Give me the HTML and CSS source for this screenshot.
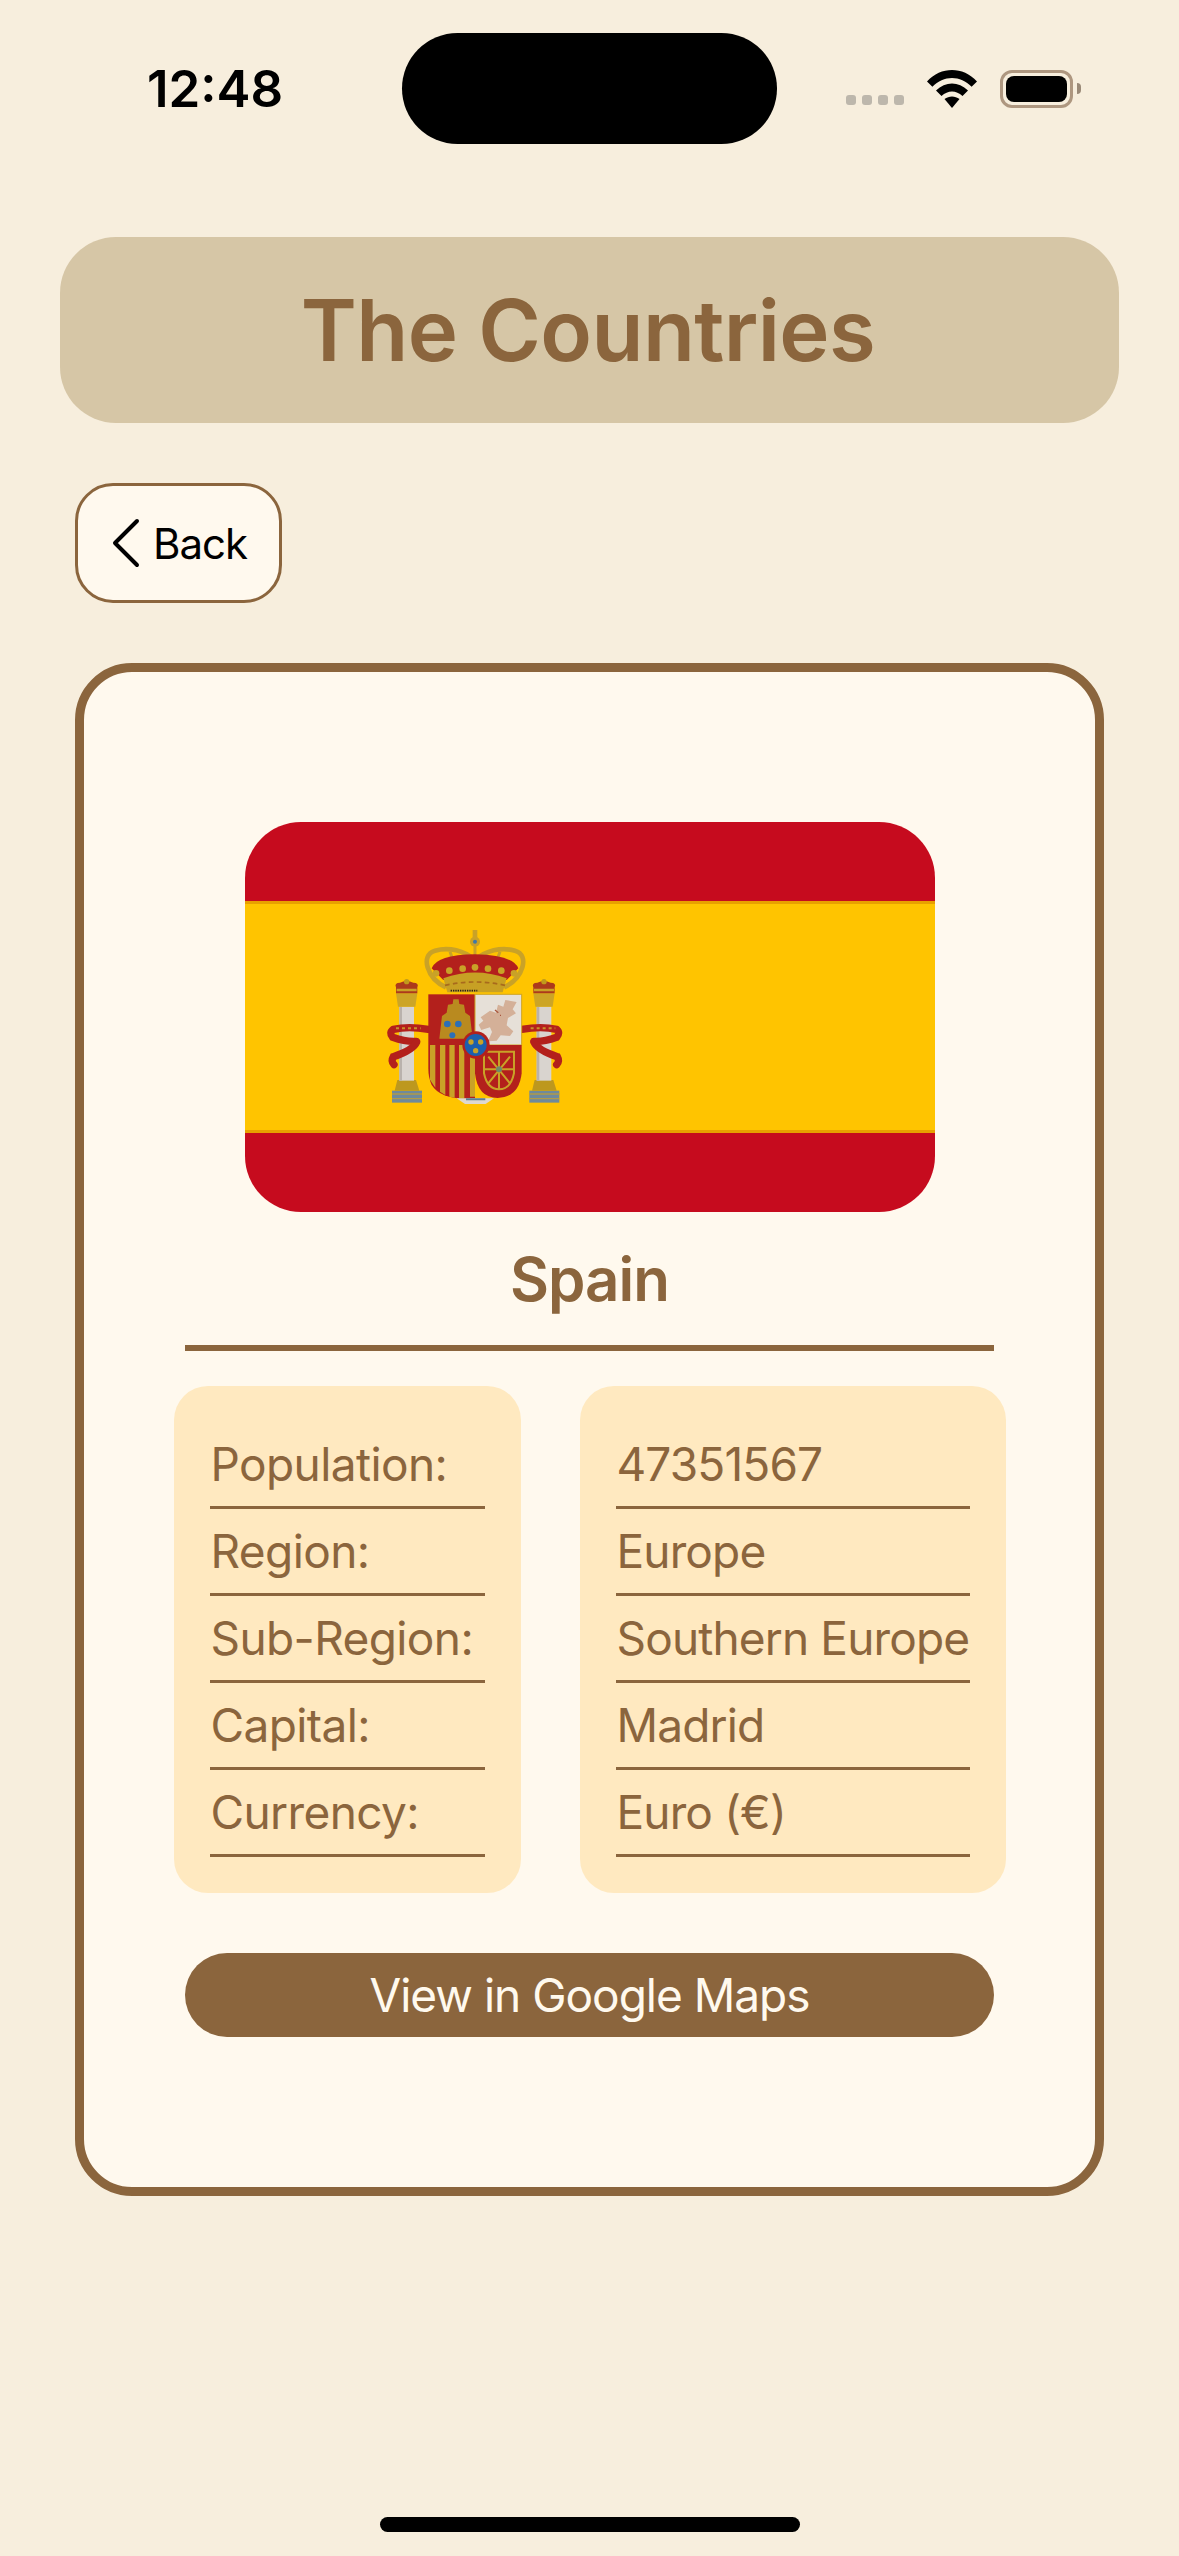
FILE: index.html
```html
<!DOCTYPE html>
<html lang="en">
  <head>
    <meta charset="UTF-8" />
    <meta name="viewport" content="width=device-width, initial-scale=1.0" />
    <title>The Countries</title>
    <link rel="stylesheet" href="styles.css">
  </head>
  <body>
    <div class="screen">
      <div class="status">
        <div class="status_time">12:48</div>
        <div class="island"></div>
        <div class="status_icons">
          <div class="signal"><span></span><span></span><span></span><span></span></div>
          <svg class="wifi" width="50" height="38" viewBox="0 0 50 38">
            <path d="M0 11.500C14-3.800 36-3.800 50 11.500L44.600 16.800C33.500 5 16.500 5 5.400 16.800Z" fill="#000" />
            <path d="M9 20.600C18.500 11 31.500 11 41 20.600L35.500 26C29 20 21 20 14.500 26Z" fill="#000" />
            <path d="M17.500 29C22 25.500 28 25.500 32.500 29L25 38Z" fill="#000" />
          </svg>
          <div class="battery"><div class="battery_level"></div></div>
          <div class="battery_cap"></div>
        </div>
      </div>

      <h1 class="app_title">The Countries</h1>

      <button class="back_btn">
        <svg width="28" height="50" viewBox="0 0 28 50">
          <path d="M25 3 3 25l22 22" fill="none" stroke="#000" stroke-width="4" stroke-linecap="round" stroke-linejoin="round" />
        </svg>
        <span>Back</span>
      </button>

      <div class="card">
        <svg class="flag" width="690" height="390" viewBox="0 0 690 390">
          <rect width="690" height="390" fill="#c60b1e" />
          <rect y="79" width="690" height="232" fill="#e8a000" />
          <rect y="82" width="690" height="226" fill="#ffc400" />
          <g transform="translate(115 88) scale(.3333)">
            <!-- pillars -->
            <g id="pillar">
              <rect x="96" y="542" width="90" height="36" fill="#6f8a9c" />
              <path d="M96 552h90M96 566h90" stroke="#b09a4a" stroke-width="4" />
              <path d="M112 510h56l10 32H104Z" fill="#bd981e" />
              <rect x="118" y="290" width="44" height="222" fill="#d9d4cf" />
              <rect x="118" y="290" width="8" height="222" fill="#b9b2ac" />
              <path d="M108 250h64l-6 40h-52Z" fill="#cca526" />
              <path d="M108 250v-18q-6-14 12-14 20-8 40 0 18 0 12 14v18Z" fill="#ac3a1c" />
              <path d="M110 240h60" stroke="#c9a227" stroke-width="8" />
              <circle cx="140" cy="215" r="8" fill="#c09a1c" />
            </g>
            <use href="#pillar" x="412" />
            <!-- ribbons -->
            <g fill="none" stroke="#b3201c" stroke-width="22" stroke-linecap="round">
              <path d="M205 358q-60-10-105 0-14 10-2 24 40 14 70 12" />
              <path d="M170 396q-10 24-70 44-8 14 2 24" />
              <path d="M485 358q60-10 105 0 12 10 0 24-40 14-68 12" />
              <path d="M522 396q10 24 70 44 8 14-2 24" />
            </g>
            <g fill="none" stroke="#c9922a" stroke-width="6" stroke-dasharray="9 9">
              <path d="M108 355h74M512 355h74" />
            </g>
            <!-- crown -->
            <path d="M258 232C200 205 180 135 225 122c42-12 88 0 120 28 32-28 78-40 120-28 45 13 25 83-33 110" fill="none" stroke="#c9a227" stroke-width="14" />
            <path d="M345 105v70M270 125l18 50M420 125l-18 50" stroke="#c9a227" stroke-width="9" />
            <path d="M215 175q15-40 130-42 115 2 130 42l-35 35H250Z" fill="#b3201c" />
            <path d="M250 205q95-35 190 0l-12 42H262Z" fill="#c7a024" />
            <path d="M255 226q90-20 180 0" fill="none" stroke="#a86a1c" stroke-width="5" stroke-dasharray="14 10" />
            <path d="M272 242h80" stroke="#2a2018" stroke-width="5" stroke-dasharray="4 3" />
            <circle cx="345" cy="95" r="15" fill="#c9a227" />
            <circle cx="345" cy="95" r="6" fill="#3f78a8" />
            <rect x="338" y="60" width="14" height="24" fill="#c9a227" />
            <g fill="#c9a227">
              <circle cx="228" cy="190" r="10" /><circle cx="268" cy="182" r="10" /><circle cx="308" cy="176" r="10" />
              <circle cx="345" cy="172" r="10" />
              <circle cx="384" cy="176" r="10" /><circle cx="424" cy="182" r="10" /><circle cx="462" cy="190" r="10" />
            </g>
            <!-- shield -->
            <rect x="205" y="253" width="140" height="152" fill="#b3201c" />
            <rect x="345" y="253" width="140" height="152" fill="#e6e0d8" stroke="#cfa526" stroke-width="3" />
            <path d="M205 405h140v160q-100 8-130-40-10-20-10-50Z" fill="#b3201c" />
            <path d="M210 405h16v128l-16-24ZM240 405h16v150l-16-10ZM268 405h16v158l-16-3ZM297 405h16v160h-16ZM330 405h15v155h-15Z" fill="#c9a227" />
            <path d="M345 405h140v85q-8 72-72 74-60 0-68-74Z" fill="#b3201c" />
            <path d="M372 425h90v65q-10 48-45 48-35 0-45-48ZM417 425v113M372 478h90M385 440l65 80M450 440l-65 80" fill="none" stroke="#c9a227" stroke-width="6" />
            <circle cx="417" cy="478" r="9" fill="#6f8a6c" />
            <path d="M290 565h112l-25 17h-62Z" fill="#ded8d0" />
            <path d="M318 568h58" stroke="#5a7f96" stroke-width="6" />
            <!-- castle -->
            <path d="M238 386l8-68 14-10 4-24 14-2 2-14h16l2 14 14 2 4 24 14 10 8 68Z" fill="#b98a1f" />
            <circle cx="262" cy="342" r="10" fill="#2c6fb8" /><circle cx="295" cy="342" r="10" fill="#2c6fb8" /><circle cx="277" cy="376" r="9" fill="#2c6fb8" />
            <!-- lion -->
            <path d="M362 322l28-20 18 6 6-24 16 6 6-20 34 6-12 22 10 12-24 14-4 22 20 18-10 14-28-2-12 16-26 2 12-28-6-14-26 8-8-16 14-12Z" fill="#d4b098" />
            <path d="M405 300l10 8M420 316h3" stroke="#a8553c" stroke-width="4" />
            <!-- centre -->
            <circle cx="348" cy="405" r="41" fill="#b3201c" />
            <circle cx="347" cy="405" r="33" fill="#1d5fae" />
            <g fill="#c9a227">
              <circle cx="333" cy="396" r="8" /><circle cx="362" cy="396" r="8" /><circle cx="347" cy="422" r="8" />
            </g>
          </g>
        </svg>

        <h2 class="country_name">Spain</h2>

        <div class="details">
          <div class="details_box">
            <div class="details_row">Population:</div>
            <div class="details_row">Region:</div>
            <div class="details_row">Sub-Region:</div>
            <div class="details_row">Capital:</div>
            <div class="details_row">Currency:</div>
          </div>
          <div class="details_box">
            <div class="details_row">47351567</div>
            <div class="details_row">Europe</div>
            <div class="details_row">Southern Europe</div>
            <div class="details_row">Madrid</div>
            <div class="details_row">Euro (€)</div>
          </div>
        </div>

        <button class="maps_btn">View in Google Maps</button>
      </div>

      <div class="home_bar"></div>
    </div>
  </body>
</html>
```

FILE: styles.css
```css
* {
  margin: 0;
  padding: 0;
  box-sizing: border-box;
}

body {
  background: #f7eedd;
  font-family: Inter, "Liberation Sans", sans-serif;
  color: #8b653d;
}

.screen {
  width: 1179px;
  height: 2556px;
  overflow: hidden;
  display: flex;
  flex-direction: column;
}

.status {
  display: grid;
  grid-template-columns: 402px 375px 402px;
  align-items: center;
  margin-top: 33px;
}

.status_time {
  padding-left: 147px;
  font-size: 51px;
  font-weight: 600;
  color: #000;
}

.island {
  height: 111px;
  border-radius: 56px;
  background: #000;
}

.status_icons {
  display: flex;
  align-items: center;
  padding-left: 69px;
}

.signal {
  display: flex;
  gap: 6px;
  align-self: flex-end;
  margin: 0 23px 3px 0;
}

.signal span {
  width: 10px;
  height: 10px;
  border-radius: 3px;
  background: #bdb7ac;
}

.wifi {
  margin-right: 23px;
}

.battery {
  width: 73px;
  height: 38px;
  border: 3px solid #ae9780;
  border-radius: 12px;
  padding: 3px;
}

.battery_level {
  height: 100%;
  border-radius: 8px;
  background: #000;
}

.battery_cap {
  width: 4px;
  height: 11px;
  margin-left: 4px;
  border-radius: 0 4px 4px 0;
  background: #9a8a78;
}

.app_title {
  width: 1059px;
  height: 186px;
  margin: 93px auto 0;
  padding-right: 3px;
  display: grid;
  place-items: center;
  border-radius: 56px;
  background: #d6c6a6;
  font-size: 85px;
  font-weight: 600;
  letter-spacing: -0.6px;
}

.back_btn {
  width: 207px;
  height: 120px;
  margin: 60px 0 0 75px;
  display: flex;
  align-items: center;
  gap: 13px;
  padding-left: 34px;
  border: 3px solid #8b653d;
  border-radius: 38px;
  background: #fff9ee;
  font-family: inherit;
  font-size: 42px;
  letter-spacing: -1px;
  color: #000;
}

.card {
  width: 1029px;
  height: 1533px;
  margin: 60px auto 0;
  display: flex;
  flex-direction: column;
  align-items: center;
  padding-top: 150px;
  border: 9px solid #8b653d;
  border-radius: 57px;
  background: #fff9ee;
}

.flag {
  display: block;
  border-radius: 56px;
}

.country_name {
  width: 809px;
  height: 139px;
  display: flex;
  align-items: center;
  justify-content: center;
  border-bottom: 6px solid #8b653d;
  font-size: 60px;
  font-weight: 600;
  letter-spacing: -1px;
}

.details {
  display: flex;
  gap: 59px;
  margin-top: 35px;
}

.details_box {
  padding: 36px 36px 36px;
  border-radius: 34px;
  background: #ffe9c0;
}

.details_box:first-child {
  width: 347px;
  letter-spacing: -0.6px;
}

.details_box:last-child {
  width: 426px;
  letter-spacing: -0.85px;
}

.details_row {
  height: 87px;
  padding-top: 14px;
  border-bottom: 3px solid #8b653d;
  font-size: 46px;
  text-indent: 1px;
  white-space: nowrap;
}

.maps_btn {
  width: 809px;
  height: 84px;
  margin-top: 60px;
  border: none;
  border-radius: 42px;
  background: #8b653d;
  font-family: inherit;
  font-size: 46px;
  letter-spacing: -1px;
  color: #fff9ee;
}

.home_bar {
  width: 420px;
  height: 15px;
  margin: 321px auto 0;
  border-radius: 8px;
  background: #000;
}
```
